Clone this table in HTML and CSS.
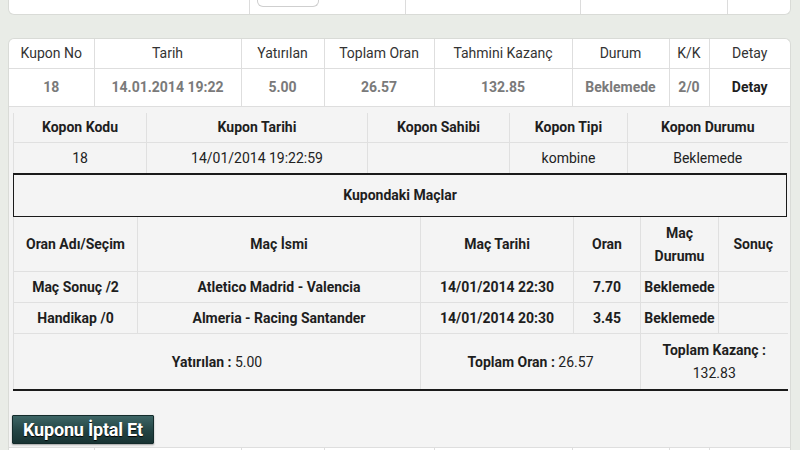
FILE: index.html
```html
<!DOCTYPE html>
<html lang="tr">
<head>
<meta charset="utf-8">
<title>Kupon Detay</title>
<link rel="stylesheet" href="styles.css">
</head>
<body>
<div class="page">
  <div class="topcard">
    <div class="tc c1"></div>
    <div class="tc c2"><div class="tbtn"></div></div>
    <div class="tc c3"></div>
    <div class="tc c4"></div>
    <div class="tc c5"></div>
  </div>

  <div class="card">
    <table class="list">
      <colgroup>
        <col style="width:85px"><col style="width:147px"><col style="width:83px"><col style="width:110px">
        <col style="width:138px"><col style="width:97px"><col style="width:40px"><col style="width:81px">
      </colgroup>
      <tr class="lh">
        <th>Kupon No</th><th>Tarih</th><th>Yatırılan</th><th>Toplam Oran</th>
        <th>Tahmini Kazanç</th><th>Durum</th><th>K/K</th><th>Detay</th>
      </tr>
      <tr class="ld">
        <td>18</td><td>14.01.2014 19:22</td><td>5.00</td><td>26.57</td>
        <td>132.85</td><td>Beklemede</td><td>2/0</td><td class="dark">Detay</td>
      </tr>
    </table>

    <div class="detail">
      <table class="kopon">
        <colgroup>
          <col style="width:133px"><col style="width:221px"><col style="width:142px"><col style="width:118px"><col style="width:160px">
        </colgroup>
        <tr class="kh">
          <th>Kopon Kodu</th><th>Kupon Tarihi</th><th>Kopon Sahibi</th><th>Kopon Tipi</th><th>Kopon Durumu</th>
        </tr>
        <tr class="kd">
          <td>18</td><td>14/01/2014 19:22:59</td><td></td><td>kombine</td><td>Beklemede</td>
        </tr>
      </table>

      <div class="matches-title">Kupondaki Maçlar</div>

      <table class="matches">
        <colgroup>
          <col style="width:124px"><col style="width:283px"><col style="width:153px"><col style="width:67px"><col style="width:78px"><col style="width:69px">
        </colgroup>
        <tr class="mh">
          <th>Oran Adı/Seçim</th><th>Maç İsmi</th><th>Maç Tarihi</th><th>Oran</th><th>Maç<br>Durumu</th><th>Sonuç</th>
        </tr>
        <tr class="md">
          <td>Maç Sonuç /2</td><td>Atletico Madrid - Valencia</td><td>14/01/2014 22:30</td><td>7.70</td><td>Beklemede</td><td></td>
        </tr>
        <tr class="md">
          <td>Handikap /0</td><td>Almeria - Racing Santander</td><td>14/01/2014 20:30</td><td>3.45</td><td>Beklemede</td><td></td>
        </tr>
        <tr class="ms">
          <td colspan="2"><b>Yatırılan :</b> 5.00</td>
          <td colspan="2"><b>Toplam Oran :</b> 26.57</td>
          <td colspan="2"><b>Toplam Kazanç :</b><br>132.83</td>
        </tr>
      </table>

      <button class="cancel" type="button">Kuponu İptal Et</button>
    </div>

    <table class="list next">
      <colgroup>
        <col style="width:85px"><col style="width:147px"><col style="width:83px"><col style="width:110px">
        <col style="width:138px"><col style="width:97px"><col style="width:40px"><col style="width:81px">
      </colgroup>
      <tr class="ld">
        <td></td><td></td><td></td><td></td><td></td><td></td><td></td><td></td>
      </tr>
    </table>
  </div>
</div>
</body>
</html>
```

FILE: styles.css
```css
* { box-sizing: border-box; }

html, body {
  margin: 0;
  padding: 0;
  height: 100%;
  overflow: hidden;
}

body {
  background: #e9ece7;
  font-family: Roboto, "Liberation Sans", Arial, sans-serif;
  font-size: 14px;
  color: #222;
}

.page {
  margin: 0 9px 0 8px;
}

.topcard {
  display: grid;
  grid-template-columns: 240px 156px 175px 147px 1fr;
  height: 15px;
  background: #fff;
  border: 1px solid #d9dbd7;
  border-top: none;
  border-radius: 0 0 6px 6px;
}

.tc + .tc { border-left: 1px solid #dcdcdc; }

.tbtn {
  width: 62px;
  height: 7px;
  margin-left: 7px;
  border: 1px solid #cfcfcf;
  border-top: none;
  border-radius: 0 0 6px 6px;
}

.card {
  margin-top: 23px;
  background: #fff;
  border: 1px solid #d9dbd7;
  border-radius: 6px 6px 0 0;
  border-bottom: none;
}

table {
  border-collapse: collapse;
  table-layout: fixed;
}

.list {
  width: 100%;
}

.list th, .list td {
  text-align: center;
  padding: 0;
  border-bottom: 1px solid #dedede;
}

.list th + th, .list td + td { border-left: 1px solid #dedede; }

.list th {
  height: 29px;
  font-weight: normal;
  color: #333;
}

.list .ld td {
  height: 38px;
  font-weight: bold;
  color: #7a7a7a;
}

.list .ld td.dark { color: #1e1e1e; }

.next .ld td { height: 12px; border-bottom: none; }

.detail {
  background: #f4f4f4;
  padding: 6px 3px 3px 4px;
  border-bottom: 1px solid #dedede;
}

.kopon, .matches {
  width: 774px;
}

.kopon th, .kopon td {
  text-align: center;
  padding: 0;
  height: 30px;
  border-left: 1px solid #e0e0e0;
}

.kopon th { border-bottom: 1px solid #e0e0e0; font-weight: bold; color: #1e1e1e; }
.kopon td { color: #222; }

.matches-title {
  height: 44px;
  border: 1px solid #1a1a1a;
  border-top-width: 2px;
  display: flex;
  align-items: center;
  justify-content: center;
  font-weight: bold;
  color: #1e1e1e;
}

.matches th, .matches td {
  text-align: center;
  padding: 0;
  border-left: 1px solid #e0e0e0;
  border-bottom: 1px solid #e0e0e0;
}

.matches th {
  height: 55px;
  padding-top: 2px;
  line-height: 23px;
  font-weight: bold;
  color: #1e1e1e;
}

.matches .md td {
  height: 31px;
  font-weight: bold;
  color: #1e1e1e;
}

.matches .ms td {
  height: 56px;
  padding-top: 2px;
  line-height: 23px;
  color: #222;
  border-bottom: 2px solid #1a1a1a;
}

.matches .ms td b { color: #1e1e1e; }

.cancel {
  display: block;
  margin: 24px 0 0 -1px;
  width: 142px;
  height: 29px;
  padding: 0;
  border: 1px solid #132b2b;
  border-radius: 1px;
  background: linear-gradient(#3d6565, #234444 55%, #183333);
  color: #fff;
  font-family: Roboto, "Liberation Sans", Arial, sans-serif;
  font-size: 18px;
  font-weight: bold;
  letter-spacing: -0.2px;
  text-shadow: 0 1px 1px #000;
  box-shadow: 0 1px 2px rgba(0,0,0,0.35);
}
```
